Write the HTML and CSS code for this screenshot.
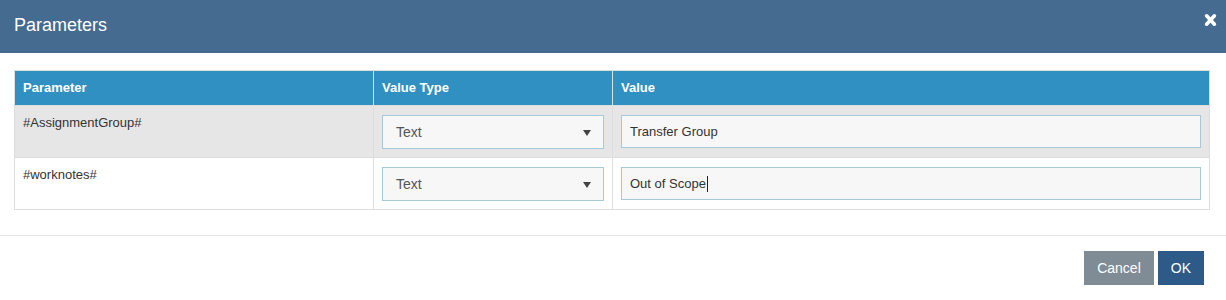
FILE: index.html
```html
<!DOCTYPE html>
<html lang="en">
<head>
    <meta charset="UTF-8">
    <meta name="viewport" content="width=device-width, initial-scale=1.0">
    <title>Parameters</title>
    <link rel="stylesheet" href="styles.css">
</head>
<body>
    <div class="modal">
        <div class="modal-header">
            <h4 class="modal-title">Parameters</h4>
            <button class="close" type="button" aria-label="Close">
                <svg width="13" height="14" viewBox="0 0 13 14">
                    <path d="M2.6 2.8 L10.4 11.2 M10.4 2.8 L2.6 11.2" stroke="#fff" stroke-width="3.6" stroke-linecap="round"/>
                </svg>
            </button>
        </div>

        <div class="modal-body">
            <table class="param-table">
                <colgroup>
                    <col class="col-param">
                    <col class="col-type">
                    <col>
                </colgroup>
                <thead>
                    <tr>
                        <th>Parameter</th>
                        <th>Value Type</th>
                        <th>Value</th>
                    </tr>
                </thead>
                <tbody>
                    <tr class="odd">
                        <td>#AssignmentGroup#</td>
                        <td>
                            <div class="select-box">
                                <span>Text</span>
                                <span class="caret"></span>
                            </div>
                        </td>
                        <td><input class="value-input" type="text" value="Transfer Group"></td>
                    </tr>
                    <tr>
                        <td>#worknotes#</td>
                        <td>
                            <div class="select-box">
                                <span>Text</span>
                                <span class="caret"></span>
                            </div>
                        </td>
                        <td><div class="value-input focused">Out of Scope<span class="cursor"></span></div></td>
                    </tr>
                </tbody>
            </table>
        </div>

        <div class="modal-footer">
            <button class="btn btn-cancel" type="button">Cancel</button>
            <button class="btn btn-ok" type="button">OK</button>
        </div>
    </div>
</body>
</html>
```

FILE: styles.css
```css
body {
    margin: 0;
    background-color: #fff;
    color: #333;
    font-family: "Liberation Sans", Arial, sans-serif;
    font-size: 13px;
}
.modal {
    width: 1226px;
    height: 300px;
    background: #fff;
}
.modal-header {
    display: flex;
    justify-content: space-between;
    align-items: flex-start;
    box-sizing: border-box;
    height: 53px;
    padding: 15px 9px 0 14px;
    background-color: #456b90;
    color: white;
}
.modal-title {
    margin: 0;
    font-size: 18px;
    font-weight: normal;
    line-height: 20px;
}
.close {
    display: flex;
    padding: 0;
    margin-top: -2px;
    border: none;
    background: none;
    cursor: pointer;
}
.modal-body {
    padding: 17px 16px 25px 14px;
    border-bottom: 1px solid #e5e5e5;
}
.param-table {
    width: 100%;
    border-collapse: collapse;
    border: 1px solid #ddd;
}
.col-param {
    width: 359px;
}
.col-type {
    width: 239px;
}
.param-table th {
    padding: 8px;
    background-color: #3190c2;
    color: white;
    font-size: 13px;
    line-height: 18px;
    text-align: left;
    border-left: 1px solid #ddd;
}
.param-table td {
    padding: 8px;
    line-height: 18px;
    vertical-align: top;
    border: 1px solid #ddd;
}
.param-table tr.odd td {
    background-color: #e6e6e6;
}
.select-box {
    display: flex;
    justify-content: space-between;
    align-items: center;
    box-sizing: border-box;
    height: 34px;
    margin-top: 1px;
    padding: 0 12px 0 13px;
    background: #f7f7f7;
    border: 1px solid #a6c8d8;
    color: #555;
    font-size: 14px;
}
.caret {
    width: 0;
    height: 0;
    margin-top: 1px;
    border-left: 4px solid transparent;
    border-right: 4px solid transparent;
    border-top: 6px solid #444;
}
.value-input {
    display: block;
    box-sizing: border-box;
    width: 100%;
    height: 33px;
    margin: 1px 0 0;
    padding: 0 8px;
    background: #f7f7f7;
    border: 1px solid #a6c8d8;
    color: #333;
    font-family: "Liberation Sans", Arial, sans-serif;
    font-size: 13px;
    line-height: 31px;
    outline: none;
}
.cursor {
    display: inline-block;
    width: 1px;
    height: 16px;
    margin-left: 1px;
    vertical-align: -4px;
    background: #222;
}
.modal-footer {
    display: flex;
    justify-content: flex-end;
    gap: 4px;
    padding: 15px 22px 0 0;
}
.btn {
    height: 34px;
    padding: 0 13px;
    border: none;
    color: white;
    font-family: "Liberation Sans", Arial, sans-serif;
    font-size: 14px;
    cursor: pointer;
}
.btn-cancel {
    background-color: #7f8c95;
}
.btn-ok {
    background-color: #2e5a87;
}
```
